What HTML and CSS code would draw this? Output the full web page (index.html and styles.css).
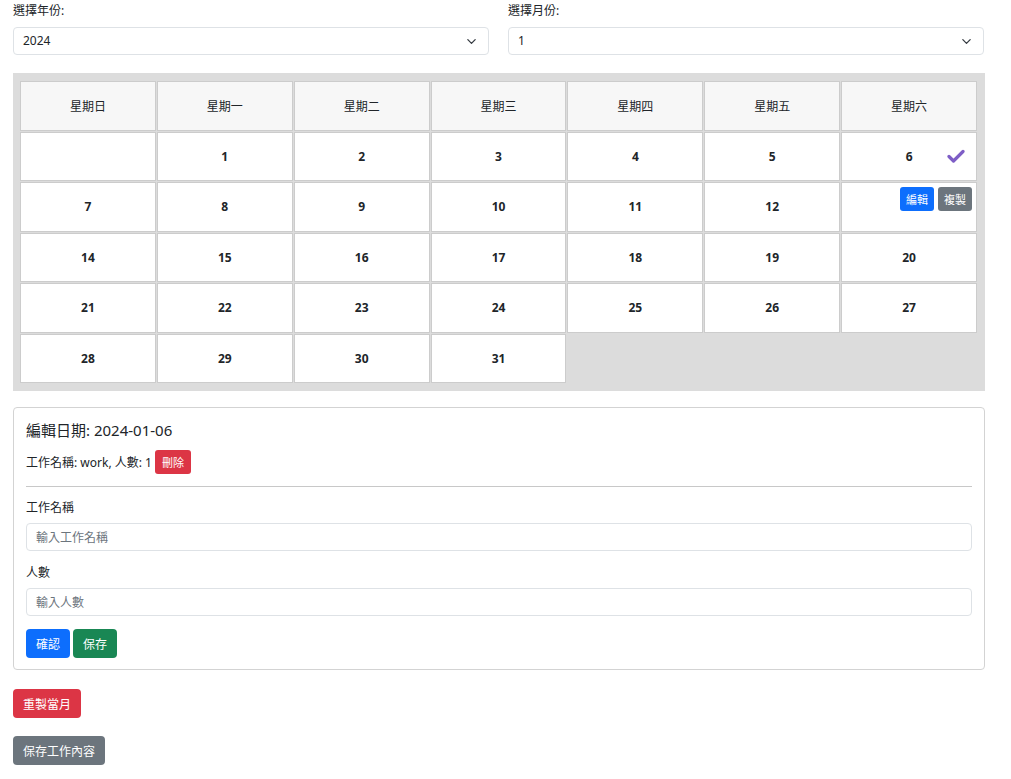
FILE: index.html
```html
<!DOCTYPE html>
<html lang="zh-Hant">
<head>
<meta charset="utf-8">
<title>排班</title>
<link rel="stylesheet" href="styles.css">
</head>
<body>
<div class="page">
  <div class="pickers">
    <div class="field">
      <div class="label">選擇年份:</div>
      <div class="select"><span>2024</span><svg class="chev" viewBox="0 0 12 12" width="11" height="11"><path d="M2 4l4 4 4-4" fill="none" stroke="#343a40" stroke-width="1.4" stroke-linecap="round" stroke-linejoin="round"/></svg></div>
    </div>
    <div class="field">
      <div class="label">選擇月份:</div>
      <div class="select"><span>1</span><svg class="chev" viewBox="0 0 12 12" width="11" height="11"><path d="M2 4l4 4 4-4" fill="none" stroke="#343a40" stroke-width="1.4" stroke-linecap="round" stroke-linejoin="round"/></svg></div>
    </div>
  </div>

  <div class="calendar">
    <div class="cell head">星期日</div>
    <div class="cell head">星期一</div>
    <div class="cell head">星期二</div>
    <div class="cell head">星期三</div>
    <div class="cell head">星期四</div>
    <div class="cell head">星期五</div>
    <div class="cell head">星期六</div>

    <div class="cell"></div>
    <div class="cell day">1</div>
    <div class="cell day">2</div>
    <div class="cell day">3</div>
    <div class="cell day">4</div>
    <div class="cell day">5</div>
    <div class="cell day selected">6
      <svg class="check" viewBox="0 0 18 14" width="18" height="14"><path d="M2 7.5l4.5 4.5L16 2.5" fill="none" stroke="#7e5ec6" stroke-width="3.2" stroke-linecap="round" stroke-linejoin="round"/></svg>
      <div class="actions">
        <span class="btn-xs blue">編輯</span>
        <span class="btn-xs grey">複製</span>
      </div>
    </div>

    <div class="cell day">7</div>
    <div class="cell day">8</div>
    <div class="cell day">9</div>
    <div class="cell day">10</div>
    <div class="cell day">11</div>
    <div class="cell day">12</div>
    <div class="cell day">13</div>

    <div class="cell day">14</div>
    <div class="cell day">15</div>
    <div class="cell day">16</div>
    <div class="cell day">17</div>
    <div class="cell day">18</div>
    <div class="cell day">19</div>
    <div class="cell day">20</div>

    <div class="cell day">21</div>
    <div class="cell day">22</div>
    <div class="cell day">23</div>
    <div class="cell day">24</div>
    <div class="cell day">25</div>
    <div class="cell day">26</div>
    <div class="cell day">27</div>

    <div class="cell day">28</div>
    <div class="cell day">29</div>
    <div class="cell day">30</div>
    <div class="cell day">31</div>
  </div>

  <div class="card">
    <div class="card-title">編輯日期: 2024-01-06</div>
    <div class="entry"><span>工作名稱: work, 人數: 1</span><span class="btn-sm red">刪除</span></div>
    <hr class="divider">
    <div class="form-label first">工作名稱</div>
    <div class="input">輸入工作名稱</div>
    <div class="form-label">人數</div>
    <div class="input">輸入人數</div>
    <div class="form-actions">
      <span class="btn blue">確認</span>
      <span class="btn green">保存</span>
    </div>
  </div>

  <div class="bottom-btn first"><span class="btn red">重製當月</span></div>
  <div class="bottom-btn"><span class="btn grey">保存工作內容</span></div>
</div>
</body>
</html>
```

FILE: styles.css
```css
* { box-sizing: border-box; }
body {
  margin: 0;
  background: #fff;
  color: #212529;
  font-family: "Noto Sans", "Noto Sans CJK TC", sans-serif;
  font-size: 12px;
}
.page {
  width: 972px;
  margin-left: 13px;
}
.pickers {
  display: grid;
  grid-template-columns: 476px 476px;
  column-gap: 19px;
  padding-top: 2px;
}
.label {
  line-height: 18px;
  margin-bottom: 7px;
  color: #212529;
}
.select {
  height: 28px;
  border: 1px solid #dee2e6;
  border-radius: 4px;
  padding: 0 11px 0 9px;
  display: flex;
  align-items: center;
  justify-content: space-between;
  line-height: 1;
}
.calendar {
  margin-top: 18px;
  background: #dcdcdc;
  padding: 8px 8px 8px 7px;
  display: grid;
  grid-template-columns: repeat(7, 1fr);
  grid-auto-rows: 49.5px;
  gap: 1px;
}
.cell {
  background: #fff;
  border: 1px solid #cccccc;
  display: flex;
  align-items: center;
  justify-content: center;
  position: relative;
}
.head {
  background: #f7f7f7;
}
.day {
  font-weight: 700;
}
.selected {
  z-index: 2;
}
.check {
  position: absolute;
  right: 11px;
  top: 16px;
}
.actions {
  position: absolute;
  right: 4px;
  top: 54px;
  display: flex;
  gap: 4px;
}
.btn-xs {
  display: inline-flex;
  align-items: center;
  height: 24px;
  padding: 0 6px;
  border-radius: 3px;
  color: #fff;
  font-size: 11px;
  font-weight: 400;
}
.blue { background: #0d6efd; }
.grey { background: #6c757d; }
.red { background: #dc3545; }
.green { background: #198754; }
.card {
  margin-top: 16px;
  border: 1px solid #d3d3d3;
  border-radius: 4px;
  padding: 12px 12px 11px;
}
.card-title {
  font-size: 15px;
  line-height: 20px;
  margin-bottom: 10px;
}
.entry {
  display: flex;
  align-items: center;
  gap: 3px;
  height: 24px;
}
.btn-sm {
  display: inline-flex;
  align-items: center;
  height: 24px;
  padding: 0 7px;
  border-radius: 3px;
  color: #fff;
  font-size: 11px;
}
.divider {
  margin: 12px 0 0;
  border: 0;
  border-top: 1px solid #c8c8c8;
}
.form-label {
  line-height: 18px;
  margin-top: 13px;
  margin-bottom: 6px;
}
.form-label.first {
  margin-top: 12px;
}
.input {
  height: 28px;
  border: 1px solid #dee2e6;
  border-radius: 4px;
  padding: 0 9px;
  display: flex;
  align-items: center;
  color: #6c757d;
}
.form-actions {
  margin-top: 13px;
  display: flex;
  gap: 3px;
}
.btn {
  display: inline-flex;
  align-items: center;
  height: 29px;
  padding: 0 10px;
  border-radius: 4px;
  color: #fff;
  font-size: 12px;
}
.bottom-btn {
  margin-top: 18px;
  display: flex;
}
.bottom-btn.first {
  margin-top: 19px;
}
```
